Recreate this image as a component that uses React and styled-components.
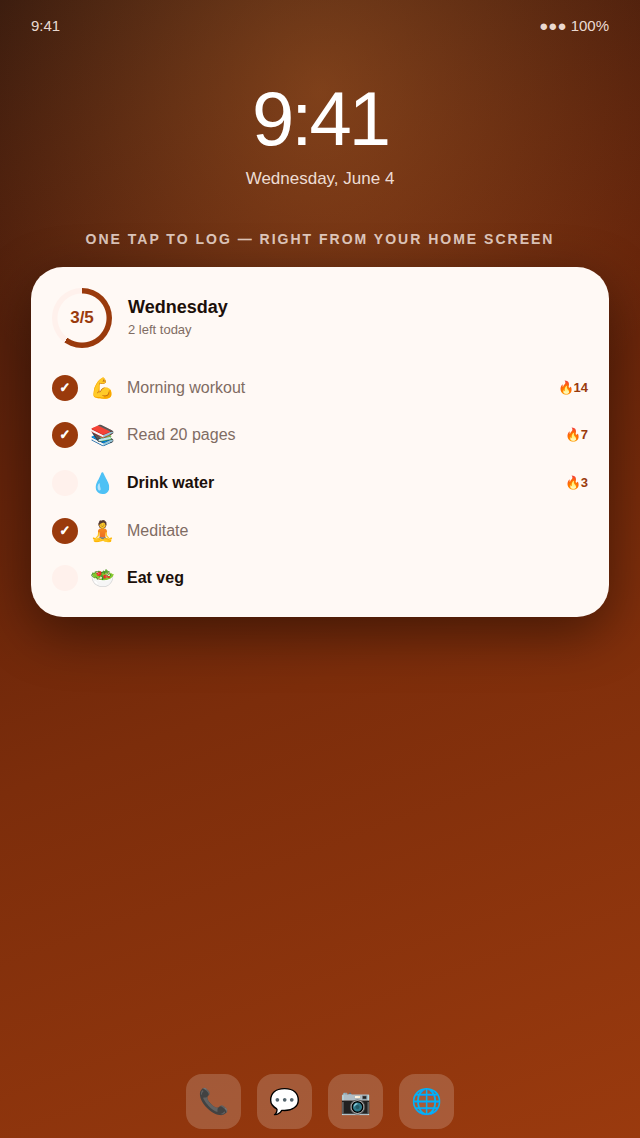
import React, { useState } from "react";
import styled, { createGlobalStyle } from "styled-components";

const GlobalStyle = createGlobalStyle`
  *, *::before, *::after { box-sizing: border-box; }
  body {
    margin: 0;
    font-family: "Liberation Sans", Arial, sans-serif;
  }
`;

const ACCENT = "#9a3a0c";
const TINT = "#fff1ec";
const INK = "#1c100a";
const MUTED = "#7f6c63";

const Screen = styled.main`
  display: flex;
  flex-direction: column;
  min-height: 100vh;
  padding: 16px 31px 9px;
  color: #fff;
  background:
    radial-gradient(ellipse 60% 38% at 50% 8%, rgba(251, 146, 60, 0.3), transparent 100%),
    linear-gradient(160deg, #34180d 0%, #64230a 35%, #7c2d0b 58%, #9a3a0e 100%);
`;

const StatusBar = styled.header`
  display: flex;
  justify-content: space-between;
  font-size: 15px;
  line-height: 20px;
  color: rgba(255, 241, 235, 0.9);
`;

const Hero = styled.section`
  display: flex;
  flex-direction: column;
  align-items: center;
  padding-top: 45px;
`;

const Clock = styled.time`
  font-size: 76px;
  line-height: 76px;
  letter-spacing: -3px;
`;

const DateLine = styled.p`
  margin: 12px 0 0;
  font-size: 17px;
  line-height: 20px;
  color: rgba(255, 241, 235, 0.9);
`;

const Tagline = styled.h1`
  margin: 42px 0 0;
  text-align: center;
  text-transform: uppercase;
  font-size: 14px;
  line-height: 16px;
  font-weight: 700;
  letter-spacing: 2px;
  color: rgba(255, 241, 235, 0.8);
`;

const Card = styled.section`
  margin-top: 20px;
  padding: 21px 21px 15px;
  border-radius: 32px;
  background: #fff9f5;
  color: ${INK};
  box-shadow: 0 16px 54px rgba(0, 0, 0, 0.45);
`;

const CardHeader = styled.div`
  display: flex;
  align-items: center;
  gap: 16px;
`;

const RingBox = styled.div`
  display: grid;
  place-items: center;
  width: 60px;
  height: 60px;
  border-radius: 50%;
  background:
    radial-gradient(circle, #fff9f5 24px, transparent 25px),
    conic-gradient(${ACCENT} ${(p) => p.$percent}%, ${TINT} 0);
  color: ${ACCENT};
  font-size: 17px;
  font-weight: 700;
`;

const DayName = styled.h2`
  margin: 0;
  font-size: 18px;
  line-height: 24px;
`;

const DayNote = styled.p`
  margin: 0;
  font-size: 13px;
  line-height: 22px;
  color: ${MUTED};
`;

const HabitList = styled.ul`
  display: grid;
  grid-auto-rows: 1fr;
  min-height: 238px;
  margin: 16px 0 0;
  padding: 0;
  list-style: none;
`;

const HabitRow = styled.li`
  display: flex;
  align-items: center;
`;

const HabitLabel = styled.label`
  display: flex;
  flex: 1;
  align-items: center;
  gap: 12px;
  cursor: pointer;
`;

const Check = styled.input`
  appearance: none;
  display: grid;
  place-items: center;
  flex: none;
  width: 26px;
  height: 26px;
  margin: 0;
  border-radius: 50%;
  background: ${TINT};
  cursor: pointer;

  &:checked { background: ${ACCENT}; }
  &:checked::before {
    content: "✓";
    color: #fff;
    font: 700 13px/16px "DejaVu Sans", sans-serif;
    -webkit-text-stroke: 1px #fff;
  }
`;

const HabitEmoji = styled.span`
  width: 25px;
  display: flex;
  justify-content: center;
  font-size: 20px;
  line-height: 24px;
`;

const HabitName = styled.span`
  font-size: 16px;
  line-height: 20px;
  font-weight: ${(p) => (p.$done ? 400 : 700)};
  color: ${(p) => (p.$done ? MUTED : INK)};
`;

const Streak = styled.span`
  font-size: 13px;
  line-height: 16px;
  font-weight: 700;
  color: ${ACCENT};
`;

const Dock = styled.nav`
  display: flex;
  justify-content: center;
  gap: 16px;
  margin-top: auto;
  padding-top: 24px;
`;

const DockButton = styled.button`
  display: grid;
  place-items: center;
  width: 55px;
  height: 55px;
  padding: 0 0 2px;
  border: 0;
  border-radius: 16px;
  background: rgba(255, 255, 255, 0.18);
  color: ${INK};
  font-family: inherit;
  font-size: 25px;
  line-height: 32px;
  cursor: pointer;
`;

const initialHabits = [
  { name: "Morning workout", emoji: "💪", done: true, streak: 14 },
  { name: "Read 20 pages", emoji: "📚", done: true, streak: 7 },
  { name: "Drink water", emoji: "💧", done: false, streak: 3 },
  { name: "Meditate", emoji: "🧘", done: true },
  { name: "Eat veg", emoji: "🥗", done: false },
];

const apps = [
  { name: "Phone", emoji: "📞" },
  { name: "Messages", emoji: "💬" },
  { name: "Camera", emoji: "📷" },
  { name: "Browser", emoji: "🌐" },
];

export default function App() {
  const [habits, setHabits] = useState(initialHabits);
  const done = habits.filter((h) => h.done).length;
  const toggle = (name) =>
    setHabits((list) => list.map((h) => (h.name === name ? { ...h, done: !h.done } : h)));

  return (
    <>
      <GlobalStyle />
      <Screen>
        <StatusBar>
          <span>9:41</span>
          <span>●●● 100%</span>
        </StatusBar>
        <Hero>
          <Clock>9:41</Clock>
          <DateLine>Wednesday, June 4</DateLine>
        </Hero>
        <Tagline>One tap to log — right from your home screen</Tagline>
        <Card>
          <CardHeader>
            <RingBox $percent={(done / habits.length) * 100}>
              {done}/{habits.length}
            </RingBox>
            <div>
              <DayName>Wednesday</DayName>
              <DayNote>{habits.length - done} left today</DayNote>
            </div>
          </CardHeader>
          <HabitList>
            {habits.map((h) => (
              <HabitRow key={h.name}>
                <HabitLabel>
                  <Check type="checkbox" checked={h.done} onChange={() => toggle(h.name)} />
                  <HabitEmoji aria-hidden="true">{h.emoji}</HabitEmoji>
                  <HabitName $done={h.done}>{h.name}</HabitName>
                </HabitLabel>
                {h.streak && <Streak>🔥{h.streak}</Streak>}
              </HabitRow>
            ))}
          </HabitList>
        </Card>
        <Dock aria-label="Dock">
          {apps.map((a) => (
            <DockButton key={a.name} type="button" aria-label={a.name}>
              {a.emoji}
            </DockButton>
          ))}
        </Dock>
      </Screen>
    </>
  );
}
